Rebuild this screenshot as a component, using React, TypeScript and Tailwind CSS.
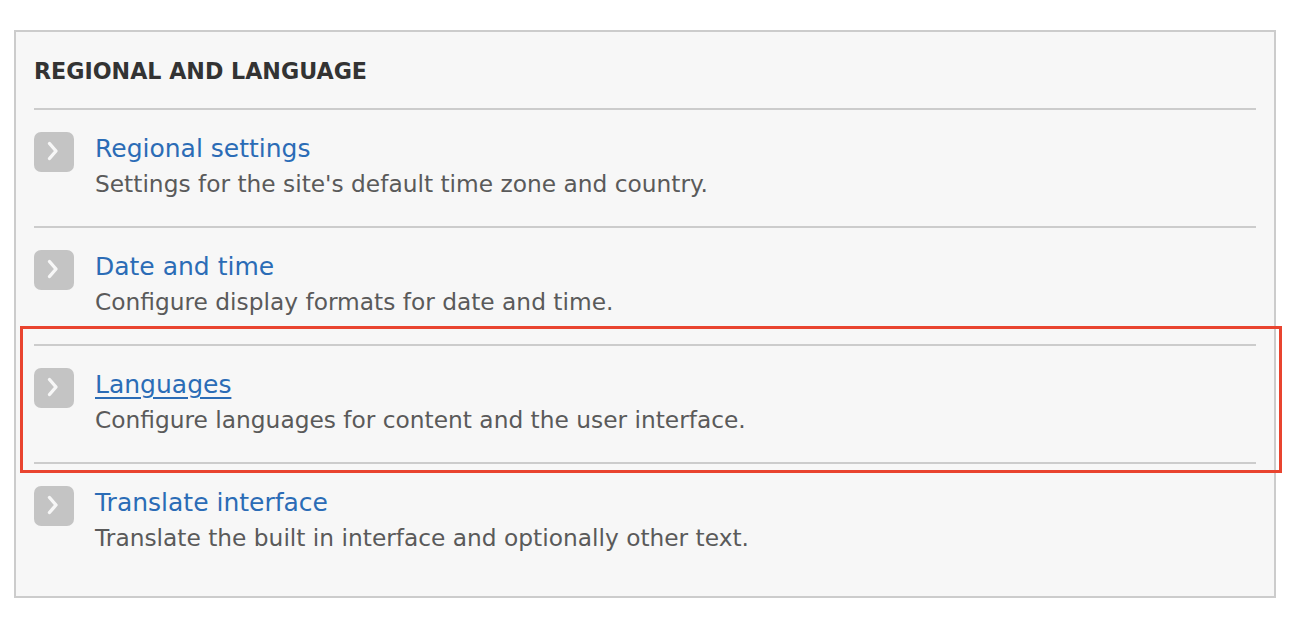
import React from 'react'

type Item = {
  title: string
  description: string
  active?: boolean
}

const items: Item[] = [
  { title: 'Regional settings', description: "Settings for the site's default time zone and country." },
  { title: 'Date and time', description: 'Configure display formats for date and time.' },
  { title: 'Languages', description: 'Configure languages for content and the user interface.', active: true },
  { title: 'Translate interface', description: 'Translate the built in interface and optionally other text.' },
]

function ChevronBox() {
  return (
    <div className="w-10 h-10 shrink-0 rounded-[7px] bg-[#c4c4c4] flex items-center justify-center">
      <svg width="40" height="40" viewBox="0 0 40 40" fill="none">
        <polyline points="15.5,11.5 22,19 15.5,26.5" stroke="#f7f7f7" strokeWidth="3.4" strokeLinecap="round" strokeLinejoin="round" />
      </svg>
    </div>
  )
}

function Row({ item }: { item: Item }) {
  return (
    <div className="border-t-2 border-[#cccccc] pt-[22px] pb-[28px] flex items-start gap-[21px]">
      <ChevronBox />
      <div className="pt-[2px]">
        <a
          href="#"
          className={
            'block w-fit text-[25px] leading-[30px] text-[#2b6cb6] ' +
            (item.active ? 'underline decoration-2 underline-offset-[4px]' : 'no-underline')
          }
        >
          {item.title}
        </a>
        <p className="mt-[6px] text-[23.3px] leading-[28px] text-[#5a5a5a]">{item.description}</p>
      </div>
    </div>
  )
}

export default function App() {
  return (
    <div className="relative min-h-[620px] bg-white pl-[14px] pt-[30px]" style={{ fontFamily: '"DejaVu Sans", Verdana, sans-serif' }}>
      <div className="w-[1262px] border-2 border-[#cccccc] bg-[#f7f7f7] px-[18px] pb-[16px]">
        <h2 className="pt-[26px] pb-[24px] text-[22.2px] leading-[26px] font-bold uppercase text-[#333333]">
          Regional and language
        </h2>
        {items.map(item => (
          <Row key={item.title} item={item} />
        ))}
      </div>

      <div className="absolute left-[20px] top-[326px] w-[1262px] h-[147px] border-[3px] border-[#e9442f] pointer-events-none" />
    </div>
  )
}
